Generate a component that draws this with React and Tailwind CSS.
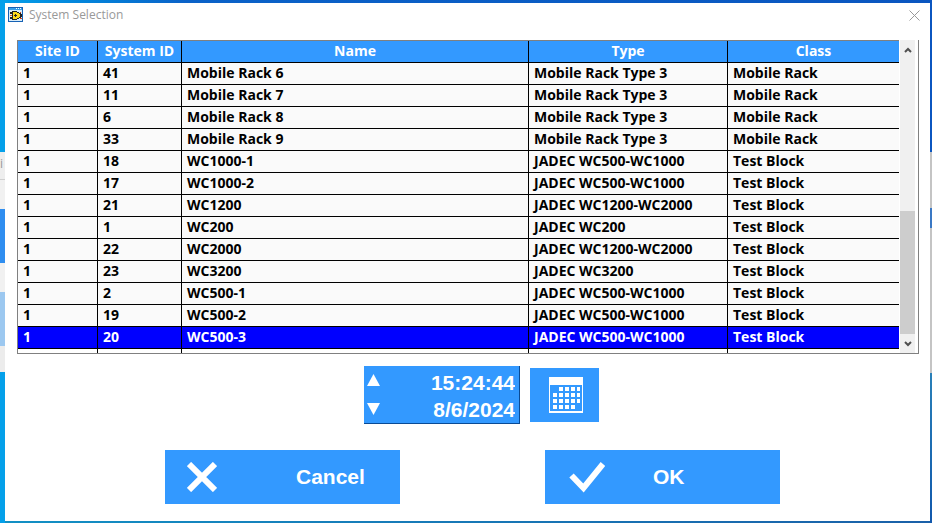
import React from "react";

const ui = 'font-["Open_Sans","Noto_Sans",sans-serif]';

const rows = [
  ["1", "41", "Mobile Rack 6", "Mobile Rack Type 3", "Mobile Rack"],
  ["1", "11", "Mobile Rack 7", "Mobile Rack Type 3", "Mobile Rack"],
  ["1", "6", "Mobile Rack 8", "Mobile Rack Type 3", "Mobile Rack"],
  ["1", "33", "Mobile Rack 9", "Mobile Rack Type 3", "Mobile Rack"],
  ["1", "18", "WC1000-1", "JADEC WC500-WC1000", "Test Block"],
  ["1", "17", "WC1000-2", "JADEC WC500-WC1000", "Test Block"],
  ["1", "21", "WC1200", "JADEC WC1200-WC2000", "Test Block"],
  ["1", "1", "WC200", "JADEC WC200", "Test Block"],
  ["1", "22", "WC2000", "JADEC WC1200-WC2000", "Test Block"],
  ["1", "23", "WC3200", "JADEC WC3200", "Test Block"],
  ["1", "2", "WC500-1", "JADEC WC500-WC1000", "Test Block"],
  ["1", "19", "WC500-2", "JADEC WC500-WC1000", "Test Block"],
  ["1", "20", "WC500-3", "JADEC WC500-WC1000", "Test Block"],
];
const headers = ["Site ID", "System ID", "Name", "Type", "Class"];

function AppIcon() {
  return (
    <svg className="h-4 w-4 shrink-0" viewBox="0 0 16 16" shapeRendering="crispEdges" aria-hidden="true">
      <rect x="0" y="0" width="15" height="15" fill="#1762b5" />
      <rect x="1" y="1" width="13" height="2" fill="#3aa0e8" />
      <rect x="8" y="1" width="1" height="1" fill="#fff" />
      <rect x="10" y="1" width="1" height="1" fill="#fff" />
      <rect x="12" y="1" width="1" height="1" fill="#fff" />
      <rect x="1" y="3" width="13" height="11" fill="#d9ecf8" />
      <path d="M2 5h2v2H2zM2 10h2v2H2z" fill="#222" />
      <path d="M2 8h3v1H2z" fill="#e06020" />
      <path d="M4 4h5v1h2v1h2v1h1v3h-1v1h-2v1H9v1H4z" fill="#222" />
      <path d="M5 5h4v1h2v1h1v3h-1v1H9v1H5z" fill="#ffd91a" />
      <path d="M7 7h1v1h1v1H8v1H7V9H6V8h1z" fill="#222" />
      <path d="M12 5h1v1h-1zM12 11h2v1h-2z" fill="#d44820" />
    </svg>
  );
}

function LeftDesktop() {
  return (
    <div className="flex w-[5px] shrink-0 flex-col overflow-hidden bg-[#04a0ea]" aria-hidden="true">
      <div className="h-[149px]" />
      <div className="h-7 border-b border-[#d0d0d0] bg-[#eeeeee] font-['Open_Sans',sans-serif] text-xs leading-6 text-[#999999]">i</div>
      <div className="h-[29px] bg-[#f1f1f1]" />
      <div className="h-[54px] bg-[#2f8ef0]" />
      <div className="h-[29px] bg-[#f1f1f1]" />
      <div className="h-[54px] bg-[#9cc8f0]" />
      <div className="h-[26px] bg-[#ececec]" />
    </div>
  );
}

function RightDesktop() {
  return (
    <div className="flex w-0.5 shrink-0 flex-col bg-[#0b56c0]" aria-hidden="true">
      <div className="h-[149px]" />
      <div className="h-14 bg-[#c4c4c4]" />
      <div className="h-5 bg-[#3a78c4]" />
      <div className="h-[145px] bg-[#c4c4c4]" />
      <div className="grow bg-linear-to-b from-[#2a80b8] to-[#1258ac]" />
    </div>
  );
}

function SystemTable() {
  return (
    <div className="flex border-r border-b border-[#808080]">
      <table className={`${ui} w-full table-fixed border-separate border-spacing-0 border-t border-l border-[#808080] text-sm leading-[19px] font-bold text-black`}>
        <colgroup>
          <col className="w-20" />
          <col className="w-[84px]" />
          <col />
          <col className="w-[199px]" />
          <col className="w-[171px]" />
        </colgroup>
        <thead>
          <tr className="bg-[#3399ff] text-white">
            {headers.map((h) => (
              <th key={h} scope="col" className="h-[22px] border-r border-b border-black p-0 text-center align-top last:border-r-0">
                {h}
              </th>
            ))}
          </tr>
        </thead>
        <tbody>
          {rows.map((row) => (
            <tr
              key={row[1]}
              aria-selected={row[1] === "20"}
              className={row[1] === "20" ? "bg-[#0000ff] text-white" : "bg-[#fafafa]"}
            >
              {row.map((cell, i) => (
                <td key={i} className="h-[22px] overflow-hidden border-r border-b border-black p-0 pl-[5px] align-top whitespace-nowrap last:border-r-0">
                  {cell}
                </td>
              ))}
            </tr>
          ))}
          <tr aria-hidden="true">
            {headers.map((h) => (
              <td key={h} className="h-1 border-r border-black p-0 last:border-r-0" />
            ))}
          </tr>
        </tbody>
      </table>
      <div className="mr-[3px] ml-px flex w-[15px] shrink-0 flex-col bg-[#f0f0f0]">
        <button type="button" aria-label="Scroll up" className="flex h-[19px] items-center justify-center">
          <svg className="h-[6px] w-2" viewBox="0 0 8 6" fill="none" stroke="#505050" strokeWidth="2" aria-hidden="true">
            <path d="M1 5l3-3 3 3" />
          </svg>
        </button>
        <div className="flex grow flex-col justify-end">
          <div className="h-[123px] bg-[#cdcdcd]" />
        </div>
        <button type="button" aria-label="Scroll down" className="flex h-[19px] items-center justify-center">
          <svg className="h-[6px] w-2" viewBox="0 0 8 6" fill="none" stroke="#505050" strokeWidth="2" aria-hidden="true">
            <path d="M1 1l3 3 3-3" />
          </svg>
        </button>
      </div>
    </div>
  );
}

function CalendarIcon() {
  const cells = [];
  for (let r = 0; r < 4; r++) {
    for (let c = 0; c < 5; c++) {
      if ((r === 0 && c === 0) || (r === 3 && c === 4)) continue;
      cells.push(<rect key={`${r}-${c}`} x={4 + c * 6} y={10 + r * 6} width={c === 4 ? 3 : 4} height="4" />);
    }
  }
  return (
    <svg className="h-9 w-[34px]" viewBox="0 0 34 36" fill="#fff" shapeRendering="crispEdges" aria-hidden="true">
      <path fillRule="evenodd" d="M0 0h34v36H0zM1 8v26h32V8z" />
      {cells}
    </svg>
  );
}

function DateTimePicker() {
  const field = "block h-[27px] w-full bg-transparent p-0 text-right outline-none";
  return (
    <div className="flex items-center justify-center gap-2.5">
      <div className="flex h-[58px] w-[156px] border-r border-b border-[#0a4a94] bg-[#3399ff] pr-1 pl-[3px]">
        <div className="flex shrink-0 flex-col justify-between py-2">
          <button type="button" aria-label="Increment" className="h-3 w-[13px]">
            <svg className="h-3 w-[13px]" viewBox="0 0 13 12" fill="#fff" aria-hidden="true"><path d="M6.5 0L13 12H0z" /></svg>
          </button>
          <button type="button" aria-label="Decrement" className="h-3 w-[13px]">
            <svg className="h-3 w-[13px]" viewBox="0 0 13 12" fill="#fff" aria-hidden="true"><path d="M0 0h13L6.5 12z" /></svg>
          </button>
        </div>
        <div className="min-w-0 grow pt-[3px] text-[21px] leading-[27px] font-bold text-white">
          <input aria-label="Time" defaultValue="15:24:44" className={field} />
          <input aria-label="Date" defaultValue="8/6/2024" className={field} />
        </div>
      </div>
      <button type="button" aria-label="Open calendar" className="flex h-[54px] w-[69px] items-center justify-center bg-[#3399ff] pl-0.5">
        <CalendarIcon />
      </button>
    </div>
  );
}

export default function App() {
  return (
    <div className="flex min-h-screen flex-col bg-linear-to-r from-[#1290c4] to-[#1a60a8] font-['Liberation_Sans',Arial,sans-serif]">
      <div className="h-[3px] bg-linear-to-r from-[#04a0ea] via-[#0b62c8] via-20% to-[#0b56c0]" aria-hidden="true" />
      <div className="flex grow">
        <LeftDesktop />
        <main className="mb-0.5 min-w-0 grow bg-white">
          <header className="flex h-6 items-center justify-between pr-2.5 pl-[3px]">
            <div className="flex items-center gap-[5px]">
              <AppIcon />
              <h1 className={`${ui} text-xs leading-4 text-[#999999]`}>System Selection</h1>
            </div>
            <button type="button" aria-label="Close" className="h-[11px] w-[11px]">
              <svg className="h-[11px] w-[11px]" viewBox="0 0 11 11" stroke="#999" aria-hidden="true">
                <path d="M.5.5l10 10M10.5.5l-10 10" />
              </svg>
            </button>
          </header>
          <div className="pt-[13px] pr-[11px] pl-3">
            <SystemTable />
          </div>
          <div className="mt-3 pl-7">
            <DateTimePicker />
          </div>
          <div className="mt-[26px] flex justify-center gap-[145px] pl-2.5 text-[21px] leading-7 font-bold text-white">
            <button type="button" className="flex h-[54px] w-[235px] items-center bg-[#3399ff] pl-[22px]">
              <svg className="h-[30px] w-[30px]" viewBox="0 0 30 30" stroke="#fff" strokeWidth="6" aria-hidden="true">
                <path d="M2 2l26 26M28 2L2 28" />
              </svg>
              <span className="pl-[79px]">Cancel</span>
            </button>
            <button type="button" className="flex h-[54px] w-[235px] items-center bg-[#3399ff] pl-6">
              <svg className="h-8 w-9" viewBox="0 0 36 32" fill="none" stroke="#fff" strokeWidth="6" aria-hidden="true">
                <path d="M2.5 14.5L14.5 27 34 3" />
              </svg>
              <span className="pl-12">OK</span>
            </button>
          </div>
        </main>
        <RightDesktop />
      </div>
    </div>
  );
}
